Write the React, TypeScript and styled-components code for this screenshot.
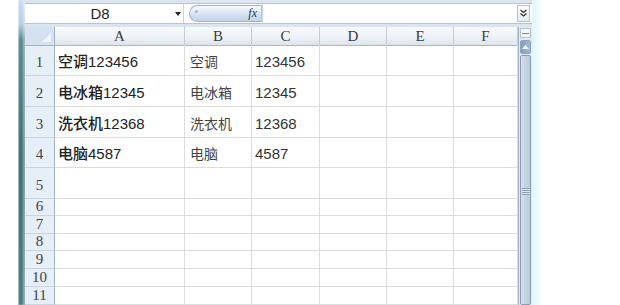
import React from 'react';
import styled, { createGlobalStyle } from 'styled-components';

const GlobalStyle = createGlobalStyle`
  html, body {
    margin: 0;
    padding: 0;
    background: #fff;
    overflow: hidden;
  }
  body {
    font-family: 'Liberation Sans', Arial, sans-serif;
  }
`;

const COLS = [
  { key: 'A', width: 130 },
  { key: 'B', width: 67 },
  { key: 'C', width: 68 },
  { key: 'D', width: 67 },
  { key: 'E', width: 67 },
  { key: 'F', width: 64 },
];

const ROWS: { n: number; height: number; cells: string[] }[] = [
  { n: 1, height: 31, cells: ['空调123456', '空调', '123456'] },
  { n: 2, height: 31, cells: ['电冰箱12345', '电冰箱', '12345'] },
  { n: 3, height: 31, cells: ['洗衣机12368', '洗衣机', '12368'] },
  { n: 4, height: 30, cells: ['电脑4587', '电脑', '4587'] },
  { n: 5, height: 31, cells: [] },
  { n: 6, height: 17, cells: [] },
  { n: 7, height: 18, cells: [] },
  { n: 8, height: 17, cells: [] },
  { n: 9, height: 18, cells: [] },
  { n: 10, height: 18, cells: [] },
  { n: 11, height: 18, cells: [] },
];

const gridTemplate = `30px ${COLS.map((c) => `${c.width}px`).join(' ')}`;

type Tone = 'strong' | 'light' | 'plain';

const Page = styled.div`
  display: flex;
  height: 305px;
  width: 620px;
  padding-left: 18px;
  box-sizing: border-box;
`;

const FrameEdge = styled.div`
  width: 7px;
  background: linear-gradient(
    to bottom,
    #c9dcf0 0px,
    #b7cde4 24px,
    #5c8a90 40px,
    #3f6f72 160px,
    #4d7d80 305px
  );
  box-shadow: inset -2px 0 2px rgba(255, 255, 255, 0.4), inset 1px 0 1px rgba(255, 255, 255, 0.5);
`;

const Window = styled.div`
  width: 507px;
  display: flex;
  flex-direction: column;
  background: #dbe5f1;
`;

const Glow = styled.div`
  width: 12px;
  background: linear-gradient(to right, #d6f4fb, #ffffff);
  opacity: 0.8;
`;

const FormulaBar = styled.div`
  height: 19px;
  margin-top: 3px;
  display: flex;
  align-items: stretch;
  background: #fff;
  border-top: 1px solid #b4c4d6;
  border-bottom: 1px solid #b4c4d6;
`;

const NameBox = styled.div`
  width: 158px;
  display: flex;
  align-items: center;
  font-family: 'Liberation Sans', Arial, sans-serif;
  font-size: 15px;
  color: #1e1e1e;
  border-right: 1px solid #c7d3e0;

  span {
    flex: 1;
    text-align: center;
  }
`;

const DropArrow = styled.div`
  width: 0;
  height: 0;
  margin-right: 2px;
  border-left: 3px solid transparent;
  border-right: 3px solid transparent;
  border-top: 4px solid #222;
`;

const FxPill = styled.div`
  margin: 1px 0 1px 5px;
  width: 73px;
  border-radius: 9px 0 0 9px;
  border: 1px solid #9fb3ca;
  border-right: 1px solid #b8c6d6;
  background: linear-gradient(to bottom, #f6f9fd 0%, #d8e5f4 50%, #bfd2ea 100%);
  display: flex;
  align-items: center;
  justify-content: space-between;
  padding: 0 4px 0 5px;
  box-sizing: border-box;
  font-family: 'Liberation Serif', 'Times New Roman', serif;
  font-style: italic;
  font-size: 12px;
  color: #333;
`;

const Dot = styled.div`
  width: 3px;
  height: 3px;
  border-radius: 50%;
  background: #a9b7c7;
  margin-top: -5px;
`;

const FormulaInput = styled.div`
  flex: 1;
  background: #fff;
  border-left: 1px solid #cdd6e0;
`;

const ExpandButton = styled.div`
  width: 11px;
  margin: 1px 2px 1px 1px;
  border: 1px solid #b3c1d2;
  background: linear-gradient(to bottom, #fbfdff, #e4ebf4);
  display: flex;
  align-items: center;
  justify-content: center;
`;

const Sheet = styled.div`
  margin-top: 3px;
  flex: 1;
  display: flex;
  overflow: hidden;
`;

const Grid = styled.div`
  width: 493px;
  display: flex;
  flex-direction: column;
  background: #fff;
`;

const Row = styled.div<{ $h: number }>`
  display: grid;
  grid-template-columns: ${gridTemplate};
  height: ${(p) => p.$h}px;
  flex-shrink: 0;
`;

const Corner = styled.div`
  background: #d3e1f1;
  border-right: 1px solid #9fb4cc;
  border-bottom: 1px solid #9fb4cc;
  position: relative;
  box-sizing: border-box;

  &::after {
    content: '';
    position: absolute;
    right: 3px;
    bottom: 3px;
    border-left: 9px solid transparent;
    border-bottom: 9px solid #f2f6fb;
  }
`;

const ColHead = styled.div`
  display: flex;
  align-items: center;
  justify-content: center;
  background: linear-gradient(to bottom, #f8fafc 0%, #eef2f7 55%, #dde4ec 100%);
  border-right: 1px solid #c2cbd6;
  border-bottom: 1px solid #a9b8c9;
  box-sizing: border-box;
  font-family: 'Liberation Serif', 'Times New Roman', serif;
  font-size: 15px;
  color: #3c3c3c;
  padding-top: 1px;
`;

const RowHead = styled.div<{ $small: boolean }>`
  display: flex;
  align-items: flex-end;
  justify-content: center;
  background: #e6eef8;
  border-right: 1px solid #9fb4cc;
  border-bottom: 1px solid #c8d4e2;
  box-sizing: border-box;
  font-family: 'Liberation Serif', 'Times New Roman', serif;
  font-size: 15px;
  line-height: 15px;
  color: #444;
  padding-bottom: ${(p) => (p.$small ? 1 : 5)}px;
`;

const Cell = styled.div<{ $tone: Tone; $pad: number }>`
  display: flex;
  align-items: flex-end;
  padding: 0 0 5px ${(p) => p.$pad}px;
  border-right: 1px solid #dcdcdc;
  border-bottom: 1px solid #dcdcdc;
  box-sizing: border-box;
  white-space: nowrap;
  overflow: hidden;
  font-family: 'Liberation Sans', Arial, 'Noto Sans CJK SC', sans-serif;
  font-size: ${(p) => (p.$tone === 'light' ? 14 : 15)}px;
  line-height: 16px;
  color: ${(p) => (p.$tone === 'strong' ? '#222' : p.$tone === 'light' ? '#444' : '#333')};
  font-weight: ${(p) => (p.$tone === 'strong' ? 500 : 400)};
`;

const ScrollBar = styled.div`
  width: 14px;
  display: flex;
  flex-direction: column;
  background: #e3e9f1;
  border-left: 1px solid #a4b4c6;
  box-sizing: border-box;
`;

const SplitBox = styled.div`
  height: 8px;
  margin: 1px 1px 0;
  border: 1px solid #b5c3d3;
  background: #f4f7fb;
  display: flex;
  align-items: center;
  justify-content: center;

  &::after {
    content: '';
    width: 7px;
    height: 1px;
    background: #7b8da3;
  }
`;

const ArrowButton = styled.div`
  height: 12px;
  margin: 2px 1px 0;
  border: 1px solid #8ea4bf;
  border-radius: 2px;
  background: linear-gradient(to right, #7f9dc4, #9fb8d8);
  display: flex;
  align-items: center;
  justify-content: center;
`;

const Thumb = styled.div`
  flex: 1;
  margin: 1px 1px 0;
  border: 1px solid #8a9cb2;
  border-radius: 2px;
  background: linear-gradient(to right, #d9e2ed, #c8d4e3 50%, #bccadb);
  display: flex;
  flex-direction: column;
  align-items: center;
  padding-top: 132px;
`;

const Grip = styled.div`
  width: 7px;
  height: 7px;
  background: repeating-linear-gradient(
    to bottom,
    #8d9cae 0px,
    #8d9cae 1px,
    #dfe6ef 1px,
    #dfe6ef 2px
  );
`;

const toneFor = (i: number): Tone => (i === 0 ? 'strong' : i === 1 ? 'light' : 'plain');

export default function App() {
  return (
    <>
      <GlobalStyle />
      <Page>
        <FrameEdge />
        <Window>
          <FormulaBar>
            <NameBox>
              <span>D8</span>
              <DropArrow />
            </NameBox>
            <FxPill>
              <Dot />
              <span>fx</span>
            </FxPill>
            <FormulaInput />
            <ExpandButton>
              <svg width="7" height="9" viewBox="0 0 7 9">
                <path d="M0.5 1 L3.5 3.5 L6.5 1 M0.5 4.5 L3.5 7 L6.5 4.5" stroke="#333" strokeWidth="1.3" fill="none" />
              </svg>
            </ExpandButton>
          </FormulaBar>
          <Sheet>
            <Grid>
              <Row $h={18}>
                <Corner />
                {COLS.map((c) => (
                  <ColHead key={c.key}>{c.key}</ColHead>
                ))}
              </Row>
              {ROWS.map((r) => (
                <Row key={r.n} $h={r.height}>
                  <RowHead $small={r.height < 20}>{r.n}</RowHead>
                  {COLS.map((c, i) => (
                    <Cell key={c.key} $tone={toneFor(i)} $pad={i === 1 ? 5 : 3}>
                      {r.cells[i] ?? ''}
                    </Cell>
                  ))}
                </Row>
              ))}
            </Grid>
            <ScrollBar>
              <SplitBox />
              <ArrowButton>
                <svg width="7" height="4" viewBox="0 0 7 4">
                  <path d="M0 4 L3.5 0 L7 4 Z" fill="#f4f7fb" />
                </svg>
              </ArrowButton>
              <Thumb>
                <Grip />
              </Thumb>
            </ScrollBar>
          </Sheet>
        </Window>
        <Glow />
      </Page>
    </>
  );
}
